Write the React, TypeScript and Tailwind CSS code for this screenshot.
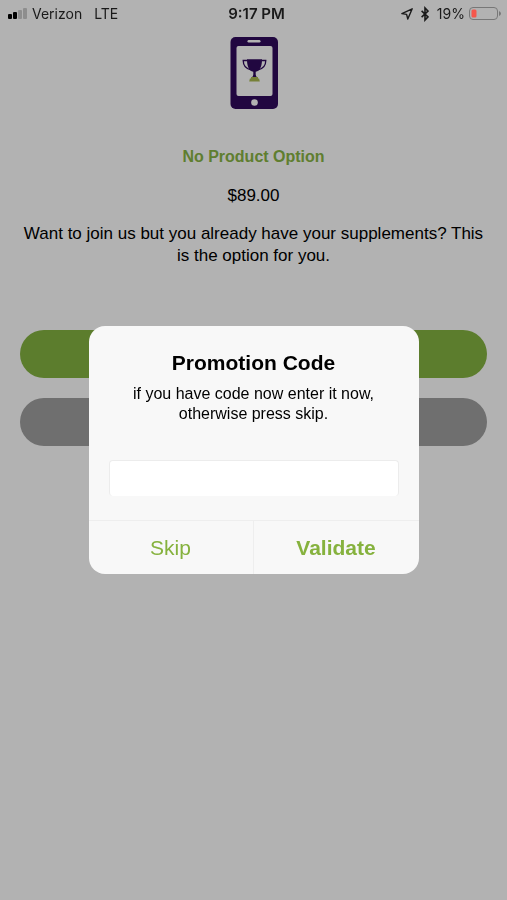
import React, { useState } from 'react';

// stays above the dialog backdrop, so it is never dimmed
const StatusBar: React.FC = () => {
  return (
    <header className="relative z-10 grid grid-cols-3 items-center h-7 pl-2 pr-1.5 font-['Inter',sans-serif] text-sm text-[#1a1a1a]">
      <div className="flex items-center">
        <svg className="w-5 h-3 mr-1 shrink-0" viewBox="0 0 20 12">
          <rect x="0" y="6" width="4" height="5" rx="1" />
          <rect x="5" y="4" width="4" height="7" rx="1" />
          <rect x="10" y="2" width="4" height="9" rx="1" fill="#8e8e8e" />
          <rect x="15" y="0" width="4" height="11" rx="1" fill="#8e8e8e" />
        </svg>
        <span>Verizon</span>
        <span className="ml-3">LTE</span>
      </div>
      <div className="pl-1 text-center text-[15px] font-semibold">9:17 PM</div>
      <div className="flex items-center justify-end">
        <svg className="w-3 h-3 mr-2" viewBox="0 0 12 12" fill="none" stroke="currentColor" strokeWidth="1.4" strokeLinejoin="round">
          <path d="M11.2 0.8 L0.9 5.6 L5.6 6.4 L6.8 11 Z" />
        </svg>
        <svg className="w-2 h-4 mr-2" viewBox="0 0 8 16" fill="none" stroke="currentColor" strokeWidth="1.6">
          <path d="M0.6 4.8 L7 10.8 L4 14 V2 L7 5.2 L0.6 11.2" />
        </svg>
        <span>19%</span>
        <svg className="w-8 h-4 ml-1 shrink-0" viewBox="0 0 32 16">
          <rect x="0.5" y="1.5" width="28" height="12" rx="3.5" fill="none" stroke="#777777" />
          <rect x="2.5" y="3.5" width="5" height="8" rx="1.5" fill="#f5564b" />
          <path d="M30 5 q2 1 2 2.5 q0 1.5 -2 2.5 z" fill="#777777" />
        </svg>
      </div>
    </header>
  );
};

const PhoneTrophy: React.FC = () => {
  return (
    <svg className="w-12 h-18" viewBox="0 0 48 72">
      <rect x="0.5" y="0" width="47.5" height="72" rx="5" fill="#300b5c" />
      <rect x="17.5" y="3" width="13" height="2.4" rx="1.2" fill="#fff" />
      <rect x="6.5" y="9" width="36" height="50" rx="2" fill="#fff" />
      <circle cx="24.5" cy="65.5" r="3.3" fill="#fff" />
      <g transform="translate(0.5 -1)">
        <g fill="none" stroke="#300b5c" strokeWidth="1.3">
          <path d="M17 24.5 H12.7 C12.7 29.5 15.5 33 21 34" />
          <path d="M31 24.5 H35.3 C35.3 29.5 32.5 33 27 34" />
        </g>
        <path d="M16.5 23.2 H31.5 C31.5 30 30 34.2 25.2 35.8 V38.5 Q25.2 40.6 27 41.5 H21 Q22.8 40.6 22.8 38.5 V35.8 C18 34.2 16.5 30 16.5 23.2 Z" fill="#300b5c" />
        <path d="M20.5 41 H27.5 V42.4 H28.6 L29.3 45.5 H18.7 L19.4 42.4 H20.5 Z" fill="#a9b84f" />
      </g>
    </svg>
  );
};

const PromotionDialog: React.FC = () => {
  const [code, setCode] = useState('');

  return (
    <div className="fixed inset-0 flex items-center justify-center p-4 bg-black/30">
      <div
        role="dialog"
        aria-modal="true"
        aria-labelledby="promo-title"
        className="w-full max-w-[330px] overflow-hidden rounded-2xl bg-[#f8f8f8]"
      >
        <form onSubmit={(e) => e.preventDefault()}>
          <div className="px-5 pt-6 pb-6 text-center">
            <h2 id="promo-title" className="text-[21px] leading-[26px] font-bold text-black">
              Promotion Code
            </h2>
            <label htmlFor="promo-code" className="block px-4 pt-2 text-base leading-5 text-black">
              if you have code now enter it now, otherwise press skip.
            </label>
            <input
              id="promo-code"
              type="text"
              value={code}
              onChange={(e) => setCode(e.target.value)}
              className="block w-full h-9 mt-9 px-2 rounded border border-b-0 border-[#ececec] bg-white text-base outline-none"
            />
          </div>
          <div className="grid grid-cols-2 divide-x divide-[#eeeeee] border-t border-[#eeeeee] text-[21px] text-[#86b23e]">
            <button type="button" className="h-[53px]">Skip</button>
            <button type="submit" className="h-[53px] font-bold">Validate</button>
          </div>
        </form>
      </div>
    </div>
  );
};

const App: React.FC = () => {
  return (
    <div className="min-h-screen bg-white font-['Liberation_Sans',Arial,sans-serif]">
      <StatusBar />
      <main className="flex flex-col items-center px-5 pt-[9px] text-[17px] text-black text-center">
        <PhoneTrophy />
        <h1 className="mt-9 text-base leading-6 font-bold text-[#88b544]">No Product Option</h1>
        <p className="mt-4 leading-[22px]">$89.00</p>
        <p className="mt-4 leading-[22px]">
          Want to join us but you already have your supplements? This is the option for you.
        </p>
        <div className="flex flex-col w-full gap-5 mt-[63px]">
          <button type="button" aria-label="Select" className="w-full h-12 rounded-full bg-[#84b341]" />
          <button type="button" aria-label="Cancel" className="w-full h-12 rounded-full bg-[#9f9f9f]" />
        </div>
      </main>
      <PromotionDialog />
    </div>
  );
};

export default App;
